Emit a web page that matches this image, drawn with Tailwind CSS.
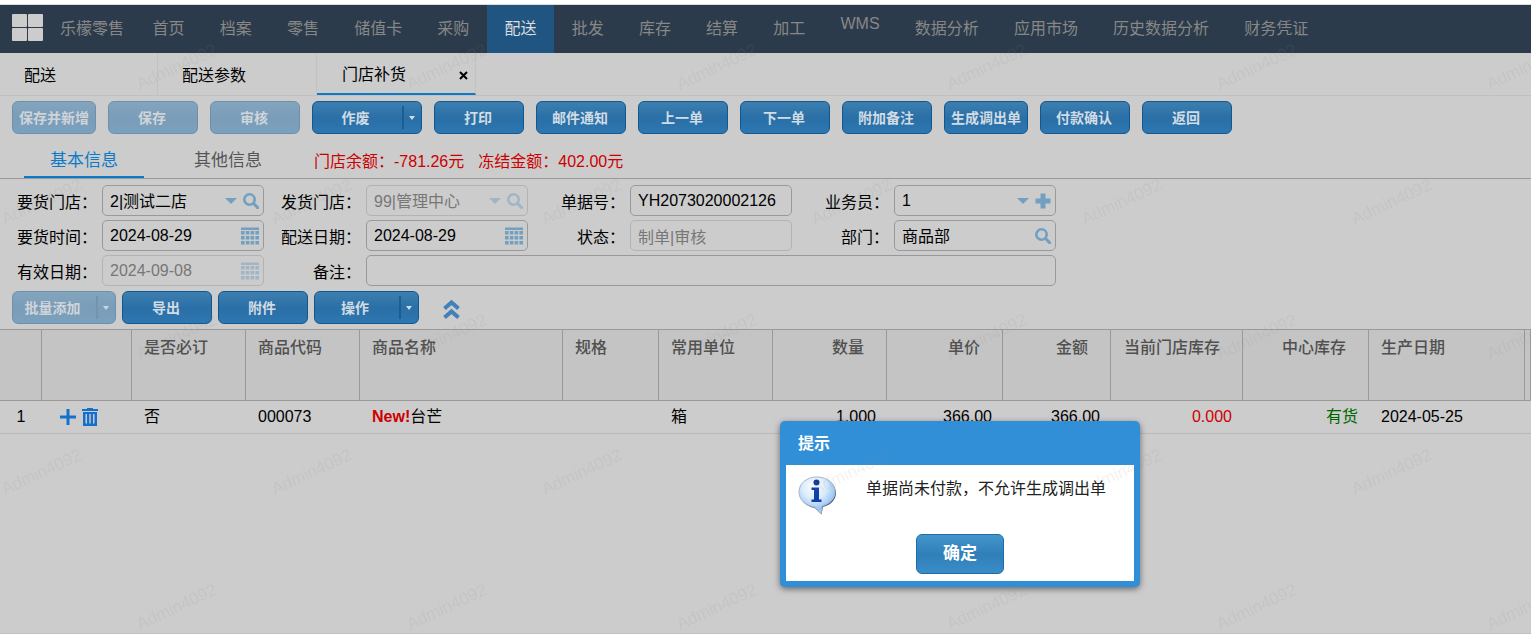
<!DOCTYPE html>
<html lang="zh-CN">
<head>
    <meta charset="utf-8">
    <meta name="viewport" content="width=device-width, initial-scale=1">
    <title>门店补货 - 乐檬零售</title>
    <script src="https://cdn.jsdelivr.net/npm/@tailwindcss/browser@4"></script>
</head>
<body class="relative flex min-h-screen flex-col overflow-x-hidden border-t-4 border-b border-t-white border-b-[#c0c0c0] bg-[#cccccc] font-['Liberation_Sans','Noto_Sans_CJK_SC',sans-serif] text-[16px] leading-[24px] text-black">

    <!-- Icon sprites -->
    <svg class="hidden">
        <symbol id="search" viewBox="0 0 16 16">
            <circle cx="6.5" cy="6.5" r="5.2" fill="none" stroke="currentColor" stroke-width="2.6"/>
            <path d="M10.3 10.3L14.6 14.6" stroke="currentColor" stroke-width="3" stroke-linecap="round"/>
        </symbol>
        <symbol id="calendar" viewBox="0 0 18 18">
            <path d="M0 0.500h18v2.500H0zM0 4h3.600v3.600H0zM4.800 4h3.600v3.600H4.800zM9.600 4h3.600v3.600H9.600zM14.400 4H18v3.600h-3.600zM0 8.900h3.600v3.600H0zM4.800 8.900h3.600v3.600H4.800zM9.600 8.900h3.600v3.600H9.600zM14.400 8.900H18v3.600h-3.600zM0 13.900h3.600v3.600H0zM4.800 13.900h3.600v3.600H4.800zM9.600 13.900h3.600v3.600H9.600zM14.400 13.900H18v3.600h-3.600z" fill="currentColor"/>
        </symbol>
        <symbol id="caret" viewBox="0 0 12 6">
            <path d="M0 0h12L6 6z" fill="currentColor"/>
        </symbol>
        <symbol id="plus" viewBox="0 0 16 16">
            <path d="M5.500 0.500h5v5h5v5h-5v5h-5v-5h-5v-5h5z" fill="currentColor"/>
        </symbol>
    </svg>

    <!-- Main navigation -->
    <header class="flex h-[49px] items-stretch border-t border-[#dcdcdc] bg-[#2c3b4b] text-[#878787]">
        <a href="#" class="flex w-[135px] shrink-0 items-start gap-[16px] pt-[9px] pl-[12px] leading-[normal] whitespace-nowrap">
            <svg class="h-[28px] w-[32px] shrink-0" viewBox="0 0 32 28" fill="#cccccc">
                <rect width="15" height="13" rx="1"/><rect x="16" width="15" height="13" rx="1"/>
                <rect y="14" width="15" height="13" rx="1"/><rect x="16" y="14" width="15" height="13" rx="1"/>
            </svg>
            <span class="pt-px">乐檬零售</span>
        </a>
        <nav class="flex w-[1191px] leading-[normal] whitespace-nowrap text-center *:flex-auto *:pt-[10px]">
            <a href="#">首页</a>
            <a href="#">档案</a>
            <a href="#">零售</a>
            <a href="#">储值卡</a>
            <a href="#">采购</a>
            <a href="#" class="bg-[#205481] text-[#dddddd]">配送</a>
            <a href="#">批发</a>
            <a href="#">库存</a>
            <a href="#">结算</a>
            <a href="#">加工</a>
            <a href="#">WMS</a>
            <a href="#">数据分析</a>
            <a href="#">应用市场</a>
            <a href="#">历史数据分析</a>
            <a href="#">财务凭证</a>
        </nav>
    </header>

    <!-- Page tabs -->
    <div class="flex h-[43px] border-b border-[#c0c0c0]">
        <a href="#" class="flex w-[158px] items-center border-r border-[#c2c2c2] pt-[4px] pl-[24px]">配送</a>
        <a href="#" class="flex w-[159px] items-center border-r border-[#c2c2c2] pt-[4px] pl-[24px]">配送参数</a>
        <div class="flex w-[159px] items-center justify-between border-r border-b-2 border-r-[#c2c2c2] border-b-[#0b7ac9] pt-[4px] pr-[7px] pl-[25px]">
            <a href="#">门店补货</a>
            <button type="button" aria-label="关闭">
                <svg class="size-[9px]" viewBox="0 0 9 9"><path d="M1 1l7 7M8 1L1 8" stroke="#000" stroke-width="2"/></svg>
            </button>
        </div>
    </div>

    <!-- Toolbar -->
    <div class="flex gap-[12px] px-[12px] pt-[5px] text-[14px] font-bold whitespace-nowrap text-[#d2dce4] *:h-[33px] *:shrink-0 *:rounded-[6px] *:border *:border-[#10588f] *:bg-linear-to-b *:from-[#3d7fb0] *:via-[#2a6fa6] *:to-[#2d77b1]">
        <button type="button" disabled class="w-[84px] opacity-50">保存并新增</button>
        <button type="button" disabled class="w-[90px] pr-[2px] opacity-50">保存</button>
        <button type="button" disabled class="w-[90px] pr-[2px] opacity-50">审核</button>
        <div class="flex w-[110px] items-center">
            <button type="button" class="flex-1 pr-[4px]">作废</button>
            <button type="button" aria-label="更多作废操作" class="flex h-[23px] w-[19px] items-center justify-center border-l-2 border-[#1c5d92] pr-[2px]"><svg class="h-[4px] w-[6px]" viewBox="0 0 6 4"><path d="M0 0h6L3 4z" fill="currentColor"/></svg></button>
        </div>
        <button type="button" class="w-[90px] pr-[2px]">打印</button>
        <button type="button" class="w-[90px] pr-[2px]">邮件通知</button>
        <button type="button" class="w-[90px] pr-[2px]">上一单</button>
        <button type="button" class="w-[90px] pr-[2px]">下一单</button>
        <button type="button" class="w-[90px] pr-[2px]">附加备注</button>
        <button type="button" class="w-[84px]">生成调出单</button>
        <button type="button" class="w-[90px] pr-[2px]">付款确认</button>
        <button type="button" class="w-[90px] pr-[2px]">返回</button>
    </div>

    <!-- Section tabs and balances -->
    <div class="flex h-[45px] items-stretch border-b border-[#999999] pl-[24px]">
        <a href="#" class="flex w-[120px] items-center justify-center border-b-2 border-[#0b7ac9] pt-[11px] text-[17px] text-[#0b7ac9]">基本信息</a>
        <a href="#" class="ml-[24px] flex w-[120px] items-center justify-center pt-[9px] text-[17px] text-[#555555]">其他信息</a>
        <p class="ml-[26px] flex items-center gap-[14px] pt-[11px] text-[#cc0000]">
            <span>门店余额：-781.26元</span>
            <span>冻结金额：402.00元</span>
        </p>
    </div>

    <!-- Order form -->
    <form class="grid grid-cols-[repeat(4,264px)] gap-y-[4px] pt-[6px] *:flex *:h-[31px] *:items-center">
        <div>
            <label for="store" class="w-[102px] shrink-0 pt-[5px] pr-[5px] text-right">要货门店：</label>
            <div class="flex h-full min-w-0 flex-1 items-center rounded-[5px] border border-[#999999] px-[4px] text-[#739fc0]">
                <input id="store" type="text" value="2|测试二店" class="min-w-0 flex-1 pt-[2px] pl-[3px] text-black outline-none">
                <button type="button" aria-label="展开" class="mr-[6px]"><svg class="block h-[6px] w-[12px]"><use href="#caret"/></svg></button>
                <button type="button" aria-label="查找"><svg class="block size-[16px]"><use href="#search"/></svg></button>
            </div>
        </div>
        <div>
            <label for="sender" class="w-[102px] shrink-0 pt-[5px] pr-[5px] text-right">发货门店：</label>
            <div class="flex h-full min-w-0 flex-1 items-center rounded-[5px] border border-[#b3b3b3] px-[4px] text-[#a0b6c6]">
                <input id="sender" type="text" value="99|管理中心" disabled class="min-w-0 flex-1 pt-[2px] pl-[3px] text-[#777777] outline-none">
                <button type="button" disabled aria-label="展开" class="mr-[6px]"><svg class="block h-[6px] w-[12px]"><use href="#caret"/></svg></button>
                <button type="button" disabled aria-label="查找"><svg class="block size-[16px]"><use href="#search"/></svg></button>
            </div>
        </div>
        <div>
            <label for="order-no" class="w-[102px] shrink-0 pt-[5px] pr-[5px] text-right">单据号：</label>
            <input id="order-no" type="text" value="YH2073020002126" class="h-full min-w-0 flex-1 rounded-[5px] border border-[#999999] px-[7px] outline-none">
        </div>
        <div>
            <label for="clerk" class="w-[102px] shrink-0 pt-[5px] pr-[5px] text-right">业务员：</label>
            <div class="flex h-full min-w-0 flex-1 items-center rounded-[5px] border border-[#999999] px-[4px] text-[#739fc0]">
                <input id="clerk" type="text" value="1" class="min-w-0 flex-1 pl-[3px] text-black outline-none">
                <button type="button" aria-label="展开" class="mr-[6px]"><svg class="block h-[6px] w-[12px]"><use href="#caret"/></svg></button>
                <button type="button" aria-label="新增"><svg class="block size-[16px]"><use href="#plus"/></svg></button>
            </div>
        </div>

        <div>
            <label for="order-date" class="w-[102px] shrink-0 pt-[5px] pr-[5px] text-right">要货时间：</label>
            <div class="flex h-full min-w-0 flex-1 items-center rounded-[5px] border border-[#999999] px-[4px] text-[#739fc0]">
                <input id="order-date" type="text" value="2024-08-29" class="min-w-0 flex-1 pl-[3px] text-black outline-none">
                <button type="button" aria-label="选择日期"><svg class="block size-[18px]"><use href="#calendar"/></svg></button>
            </div>
        </div>
        <div>
            <label for="ship-date" class="w-[102px] shrink-0 pt-[5px] pr-[5px] text-right">配送日期：</label>
            <div class="flex h-full min-w-0 flex-1 items-center rounded-[5px] border border-[#999999] px-[4px] text-[#739fc0]">
                <input id="ship-date" type="text" value="2024-08-29" class="min-w-0 flex-1 pl-[3px] text-black outline-none">
                <button type="button" aria-label="选择日期"><svg class="block size-[18px]"><use href="#calendar"/></svg></button>
            </div>
        </div>
        <div>
            <label for="status" class="w-[102px] shrink-0 pt-[5px] pr-[5px] text-right">状态：</label>
            <input id="status" type="text" value="制单|审核" disabled class="h-full min-w-0 flex-1 rounded-[5px] border border-[#b3b3b3] px-[7px] text-[#777777]">
        </div>
        <div>
            <label for="dept" class="w-[102px] shrink-0 pt-[5px] pr-[5px] text-right">部门：</label>
            <div class="flex h-full min-w-0 flex-1 items-center rounded-[5px] border border-[#999999] px-[4px] text-[#739fc0]">
                <input id="dept" type="text" value="商品部" class="min-w-0 flex-1 pt-[2px] pl-[3px] text-black outline-none">
                <button type="button" aria-label="查找"><svg class="block size-[16px]"><use href="#search"/></svg></button>
            </div>
        </div>

        <div>
            <label for="valid-date" class="w-[102px] shrink-0 pt-[5px] pr-[5px] text-right">有效日期：</label>
            <div class="flex h-full min-w-0 flex-1 items-center rounded-[5px] border border-[#b3b3b3] px-[4px] text-[#a0b6c6]">
                <input id="valid-date" type="text" value="2024-09-08" disabled class="min-w-0 flex-1 pl-[3px] text-[#777777]">
                <button type="button" disabled aria-label="选择日期"><svg class="block size-[18px]"><use href="#calendar"/></svg></button>
            </div>
        </div>
        <div class="col-span-3">
            <label for="remark" class="w-[102px] shrink-0 pt-[5px] pr-[5px] text-right">备注：</label>
            <input id="remark" type="text" class="h-full min-w-0 flex-1 rounded-[5px] border border-[#999999] px-[7px] outline-none">
        </div>
    </form>

    <!-- Detail toolbar -->
    <div class="flex items-center px-[12px] pt-[5px] pb-[5px]">
        <div class="flex gap-[6px] text-[14px] font-bold whitespace-nowrap text-[#d2dce4] *:h-[33px] *:shrink-0 *:rounded-[6px] *:border *:border-[#10588f] *:bg-linear-to-b *:from-[#3d7fb0] *:via-[#2a6fa6] *:to-[#2d77b1]">
            <div class="flex w-[104px] items-center opacity-50">
                <button type="button" disabled class="flex-1 pr-[4px]">批量添加</button>
                <button type="button" disabled aria-label="更多添加方式" class="flex h-[23px] w-[19px] items-center justify-center border-l-2 border-[#1c5d92] pr-[2px]"><svg class="h-[4px] w-[6px]" viewBox="0 0 6 4"><path d="M0 0h6L3 4z" fill="currentColor"/></svg></button>
            </div>
            <button type="button" class="w-[90px] pr-[2px]">导出</button>
            <button type="button" class="w-[90px] pr-[2px]">附件</button>
            <div class="flex w-[105px] items-center">
                <button type="button" class="flex-1 pr-[4px]">操作</button>
                <button type="button" aria-label="更多操作" class="flex h-[23px] w-[19px] items-center justify-center border-l-2 border-[#1c5d92] pr-[2px]"><svg class="h-[4px] w-[6px]" viewBox="0 0 6 4"><path d="M0 0h6L3 4z" fill="currentColor"/></svg></button>
            </div>
        </div>
        <button type="button" aria-label="收起" class="mt-[2px] ml-[24px]">
            <svg class="block h-[20px] w-[17px]" viewBox="0 0 17 20" fill="none" stroke="#4480b8" stroke-width="4"><path d="M1.500 9.500l7-6 7 6M1.500 18.500l7-6 7 6"/></svg>
        </button>
    </div>

    <!-- Items -->
    <table class="w-full table-fixed border-separate border-spacing-0 border-t border-[#999999] whitespace-nowrap">
        <colgroup>
            <col class="w-[42px]"><col class="w-[90px]"><col class="w-[114px]"><col class="w-[114px]"><col class="w-[203px]">
            <col class="w-[96px]"><col class="w-[114px]"><col class="w-[114px]"><col class="w-[116px]"><col class="w-[108px]">
            <col class="w-[132px]"><col class="w-[126px]"><col class="w-[156px]"><col>
        </colgroup>
        <thead class="bg-[#c4c4c4] text-[#505050]">
            <tr class="h-[71px] text-left align-top *:border-r *:border-b *:border-[#999999] *:pt-[6px] *:pl-[12px] *:font-medium">
                <th></th>
                <th></th>
                <th>是否必订</th>
                <th>商品代码</th>
                <th>商品名称</th>
                <th>规格</th>
                <th>常用单位</th>
                <th class="pr-[22px] text-right">数量</th>
                <th class="pr-[22px] text-right">单价</th>
                <th class="pr-[22px] text-right">金额</th>
                <th class="pr-[22px] text-right">当前门店库存</th>
                <th class="pr-[22px] text-right">中心库存</th>
                <th>生产日期</th>
                <th class="border-r-transparent"></th>
            </tr>
        </thead>
        <tbody>
            <tr class="h-[33px] *:border-b *:border-[#b9b9b9]">
                <td class="text-center">1</td>
                <td>
                    <div class="flex gap-[6px] pl-[18px]">
                        <button type="button" aria-label="添加行"><svg class="block size-[16px]" viewBox="0 0 16 16"><path d="M8 0v16M0 8h16" stroke="#1470cc" stroke-width="3"/></svg></button>
                        <button type="button" aria-label="删除行"><svg class="block h-[18px] w-[16px]" viewBox="0 0 16 18"><path d="M0 1h5V0h6v1h5v2H0zM1 4h14v14H1zM3.500 6v9.500H5V6zM7.300 6v9.500h1.400V6zM11 6v9.500h1.500V6z" fill="#1470cc" fill-rule="evenodd"/></svg></button>
                    </div>
                </td>
                <td class="pl-[12px]">否</td>
                <td class="pl-[12px]">000073</td>
                <td class="pl-[12px]"><b class="text-[#cc0000]">New!</b>台芒</td>
                <td></td>
                <td class="pl-[12px]">箱</td>
                <td class="pr-[11px] text-right">1.000</td>
                <td class="pr-[11px] text-right">366.00</td>
                <td class="pr-[11px] text-right">366.00</td>
                <td class="pr-[11px] text-right text-[#cc0000]">0.000</td>
                <td class="pr-[11px] text-right text-[#006600]">有货</td>
                <td class="pl-[12px]">2024-05-25</td>
                <td></td>
            </tr>
        </tbody>
    </table>

    <!-- Message dialog -->
    <div role="alertdialog" aria-labelledby="dialog-title" aria-describedby="dialog-text" class="absolute top-[417px] left-[780px] w-[360px] rounded-[5px] bg-[#318fd8] px-[6px] pb-[6px] shadow-[0_2px_6px_rgba(0,0,0,0.5)]">
        <h2 id="dialog-title" class="flex h-[44px] items-center px-[12px] pt-[2px] font-bold text-white">提示</h2>
        <div class="bg-white px-[12px] pt-[11px] pb-[7px]">
            <div class="flex h-[58px] items-start">
                <svg class="h-[40px] w-[40px] shrink-0" viewBox="0 0 40 40">
                    <defs>
                        <radialGradient id="bubble" cx="42%" cy="28%" r="72%">
                            <stop offset="0" stop-color="#ffffff"/>
                            <stop offset="0.45" stop-color="#dcecfb"/>
                            <stop offset="0.85" stop-color="#93c2f3"/>
                            <stop offset="1" stop-color="#b9d8f7"/>
                        </radialGradient>
                    </defs>
                    <path d="M20 2C9.500 2 2 8.500 2 17c0 7.500 6 13.500 14.500 15l7 6.500 1.500-7.500C33 29 38 23.500 38 17 38 8.500 30.500 2 20 2z" fill="#4c6087"/>
                    <path d="M19 1C8.500 1 1 7.500 1 16c0 7.500 6 13.500 15.500 15l6.500 7 1-8C32 28 37 22.500 37 16 37 7.500 29.500 1 19 1z" fill="url(#bubble)" stroke="#a9b6cb" stroke-width="1"/>
                    <circle cx="18.500" cy="6.500" r="3" fill="#123a8c"/>
                    <path d="M13.500 11.500H21V23.500h2.500V26h-10v-2.500H16V14h-2.500z" fill="#0f3fa8"/>
                </svg>
                <p id="dialog-text" class="pt-px pl-[28px] whitespace-nowrap text-[#222222]">单据尚未付款，不允许生成调出单</p>
            </div>
            <button type="button" class="mx-auto block h-[40px] w-[88px] rounded-[6px] border border-[#1a6cab] bg-linear-to-b from-[#4595cd] via-[#2f7fb9] to-[#3a8dc8] text-[17px] font-bold text-white">确定</button>
        </div>
    </div>

    <!-- Watermark -->
    <svg class="pointer-events-none absolute inset-0 size-full" aria-hidden="true">
        <defs>
            <pattern id="watermark" width="270" height="270" patternUnits="userSpaceOnUse">
                <g fill="#808080" fill-opacity="0.1" font-size="17">
                    <text transform="translate(140 86) rotate(-25)">Admin4092</text>
                    <text transform="translate(5 221) rotate(-25)">Admin4092</text>
                </g>
            </pattern>
        </defs>
        <rect width="100%" height="100%" fill="url(#watermark)"/>
    </svg>
</body>
</html>
